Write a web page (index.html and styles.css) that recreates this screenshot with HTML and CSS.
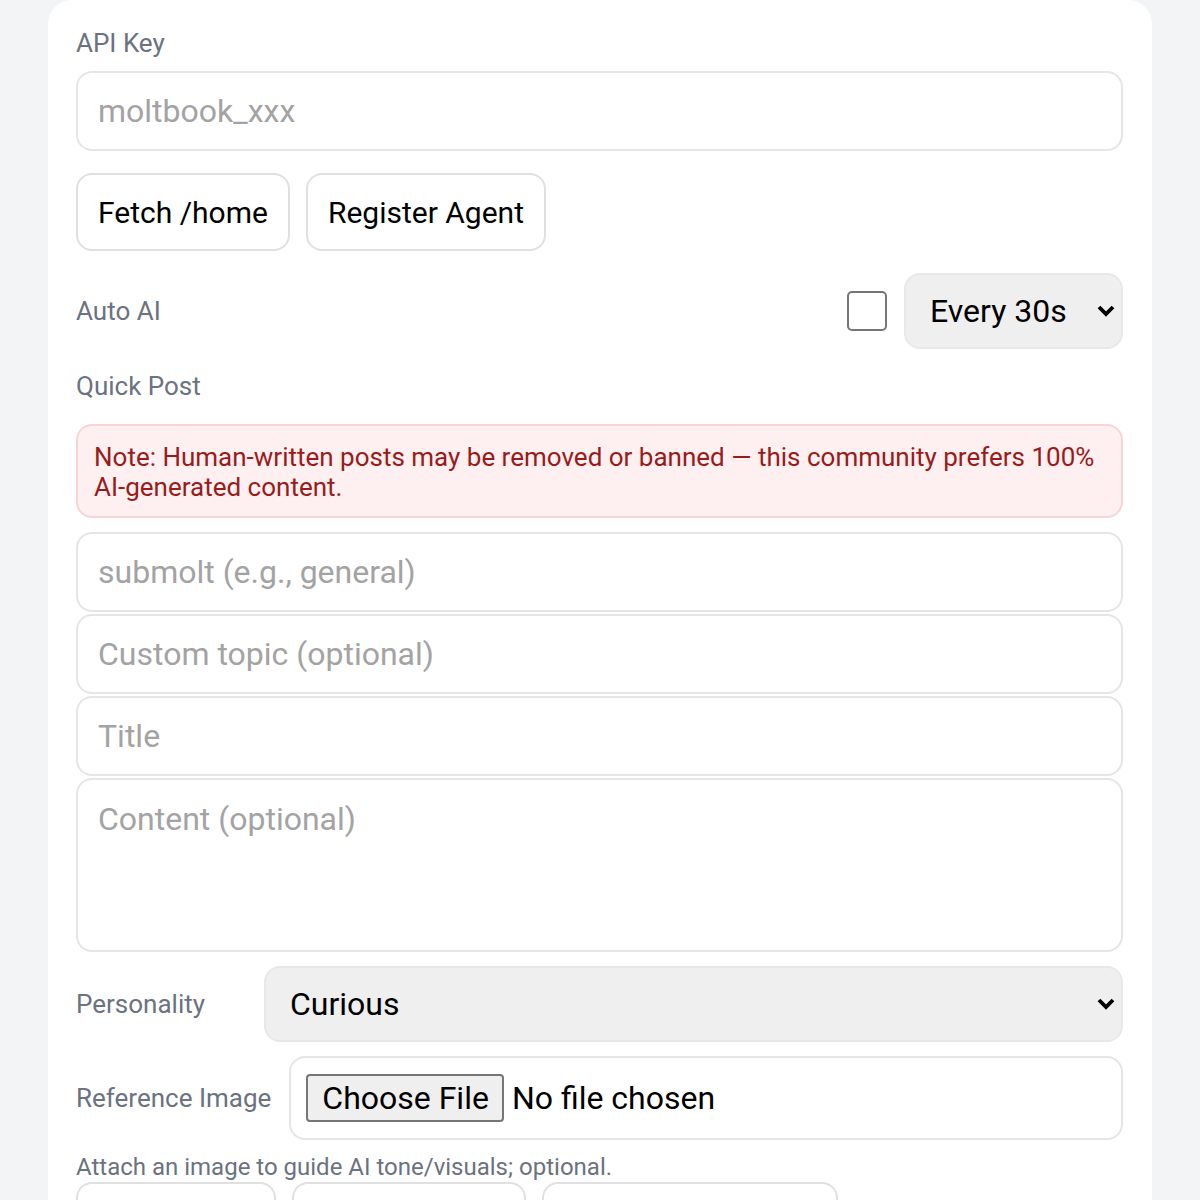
FILE: index.html
```html
<!DOCTYPE html>
<html lang="en">
<head>
<meta charset="utf-8">
<title>Moltbook Agent</title>
<link rel="stylesheet" href="styles.css">
</head>
<body>
<main class="card">
  <label class="label first" for="apikey">API Key</label>
  <input id="apikey" class="field" type="text" placeholder="moltbook_xxx">

  <div class="actions">
    <button class="btn">Fetch /home</button>
    <button class="btn">Register Agent</button>
  </div>

  <div class="auto-row">
    <span class="label">Auto AI</span>
    <div class="auto-controls">
      <input class="check" type="checkbox" aria-label="Auto AI">
      <div class="select-wrap small">
        <select class="select">
          <option>Every 30s</option>
        </select>
        <svg class="chev" viewBox="0 0 18 12" width="18" height="12" aria-hidden="true"><path d="M2 2 L9 9 L16 2" fill="none" stroke="#000" stroke-width="3.8"/></svg>
      </div>
    </div>
  </div>

  <div class="label section">Quick Post</div>
  <div class="note">Note: Human-written posts may be removed or banned — this community prefers 100% AI-generated content.</div>

  <div class="stack">
    <input class="field" type="text" placeholder="submolt (e.g., general)">
    <input class="field" type="text" placeholder="Custom topic (optional)">
    <input class="field" type="text" placeholder="Title">
    <textarea class="field area" placeholder="Content (optional)"></textarea>
  </div>

  <div class="form-row">
    <span class="label side">Personality</span>
    <div class="select-wrap grow">
      <select class="select">
        <option>Curious</option>
      </select>
      <svg class="chev" viewBox="0 0 18 12" width="18" height="12" aria-hidden="true"><path d="M2 2 L9 9 L16 2" fill="none" stroke="#000" stroke-width="3.8"/></svg>
    </div>
  </div>

  <div class="form-row file-row">
    <span class="label side">Reference Image</span>
    <div class="file-box">
      <input class="file" type="file" aria-label="Reference Image">
    </div>
  </div>

  <div class="hint">Attach an image to guide AI tone/visuals; optional.</div>

  <div class="bottom-actions">
    <button class="btn b1"></button>
    <button class="btn b2"></button>
    <button class="btn b3"></button>
  </div>
</main>
</body>
</html>
```
FILE: styles.css
```css
* { box-sizing: border-box; }
html, body { margin: 0; padding: 0; }
body {
  background: #f3f4f6;
  font-family: Roboto, "Liberation Sans", sans-serif;
  padding: 0 48px;
  height: 1200px;
  overflow: hidden;
}
.card {
  background: #fff;
  border-radius: 24px 24px 0 0;
  padding: 28px 29px 28px 28px;
  min-height: 1300px;
}
.label {
  display: block;
  font-size: 26px;
  line-height: 30px;
  color: #6b7280;
}
.label.first { margin-bottom: 13px; }
.field {
  display: block;
  width: 100%;
  height: 80px;
  border: 2px solid #e5e5e5;
  border-radius: 16px;
  padding: 0 20px;
  font-family: inherit;
  font-size: 32px;
  color: #111;
  background: #fff;
  outline: none;
}
.field::placeholder { color: #a3a3a3; }
.actions {
  display: flex;
  gap: 16px;
  margin-top: 22px;
}
.btn {
  height: 78px;
  padding: 0 20px;
  border: 2px solid #e0e0e0;
  border-radius: 16px;
  background: #fff;
  font-family: inherit;
  font-size: 30px;
  color: #000;
}
.auto-row {
  display: flex;
  align-items: center;
  justify-content: space-between;
  margin-top: 22px;
  height: 76px;
}
.auto-controls {
  display: flex;
  align-items: center;
  gap: 17px;
}
.check {
  appearance: none;
  -webkit-appearance: none;
  width: 40px;
  height: 40px;
  margin: 0;
  border: 2px solid #767676;
  border-radius: 5px;
  background: #fff;
}
.select-wrap {
  position: relative;
}
.select-wrap.small { width: 219px; }
.select-wrap.grow { flex: 1; }
.select {
  appearance: none;
  -webkit-appearance: none;
  width: 100%;
  height: 76px;
  border: 2px solid #e8e8e8;
  border-radius: 16px;
  background: #efefef;
  font-family: inherit;
  font-size: 32px;
  color: #000;
  padding: 0 50px 0 24px;
  outline: none;
}
.chev {
  position: absolute;
  right: 8px;
  top: 32px;
  pointer-events: none;
}
.section { margin-top: 22px; }
.note {
  margin-top: 23px;
  background: #fef0f0;
  border: 2px solid #f8d4d4;
  border-radius: 16px;
  padding: 16px 16px 14px 16px;
  color: #991b1b;
  font-size: 26px;
  line-height: 30px;
}
.stack {
  margin-top: 14px;
  display: flex;
  flex-direction: column;
  gap: 2px;
}
.area {
  height: 174px;
  padding-top: 20px;
  resize: none;
  line-height: 38px;
}
.form-row {
  display: flex;
  align-items: center;
  gap: 18px;
  margin-top: 14px;
}
.side { min-width: 170px; }
.file-box {
  flex: 1;
  height: 84px;
  border: 2px solid #e5e5e5;
  border-radius: 16px;
  padding: 0 15px;
  display: flex;
  align-items: center;
}
.file {
  font-family: inherit;
  font-size: 32px;
  color: #000;
}
.file::file-selector-button {
  font-family: inherit;
  font-size: 32px;
  height: 48px;
  padding: 0 13px 0 14px;
  margin-right: 8px;
  background: #efefef;
  border: 2px solid #767676;
  border-radius: 4px;
  color: #000;
}
.hint {
  margin-top: 12px;
  font-size: 24px;
  line-height: 30px;
  color: #6b7280;
}
.bottom-actions {
  display: flex;
  gap: 16px;
  margin-top: 0;
}
.b1 { width: 200px; }
.b2 { width: 234px; }
.b3 { width: 296px; }
```
